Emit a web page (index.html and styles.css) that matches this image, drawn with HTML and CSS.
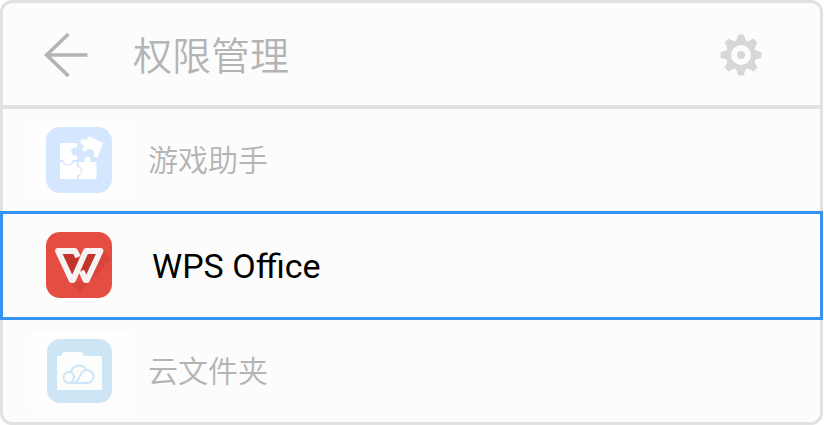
FILE: index.html
```html
<!DOCTYPE html>
<html lang="zh-CN">
<head>
    <meta charset="UTF-8">
    <meta name="viewport" content="width=device-width, initial-scale=1.0">
    <title>权限管理</title>
    <link rel="stylesheet" href="styles.css">
</head>
<body>
    <main class="panel">
        <header class="header">
            <button type="button" class="icon-button" aria-label="返回">
                <svg width="44" height="44" viewBox="0 0 44 44" fill="none" stroke="#b4b4b4" stroke-width="3.6">
                    <path d="M24.5 1 L2.5 22 L24.5 43 M2.5 22 H43.5"/>
                </svg>
            </button>
            <h1>权限管理</h1>
            <button type="button" class="icon-button settings" aria-label="设置">
                <svg width="44" height="44" viewBox="-22 -22 44 44">
                    <g fill="#d7d7d7">
                        <path id="tooth" d="M-6.5 -12 Q-4 -15 -2.7 -20.5 H2.7 Q4 -15 6.5 -12 V12 Q4 15 2.7 20.5 H-2.7 Q-4 15 -6.5 12 Z"/>
                        <use href="#tooth" transform="rotate(45)"/>
                        <use href="#tooth" transform="rotate(90)"/>
                        <use href="#tooth" transform="rotate(135)"/>
                        <circle r="14.5"/>
                    </g>
                    <circle r="10" fill="#fcfcfc"/>
                    <circle r="4" fill="#d7d7d7"/>
                </svg>
            </button>
        </header>

        <ul class="app-list">
            <li class="app">
                <span class="app-icon">
                    <svg width="66" height="66" viewBox="0 0 66 66">
                        <rect width="66" height="66" rx="14" fill="#d5e6ff"/>
                        <g fill="#fff">
                            <path d="M15 16 H31 V20.5 A4.3 4.3 0 1 0 31 28.5 V33 H26.5 A4.5 4.5 0 0 1 17.5 33 H14 V17 Z"/>
                            <path d="M14 35 H16.5 A6 6 0 0 0 27.5 35 H31 V40 A4 4 0 0 1 31 48 V52 H15 L14 51 Z"/>
                            <path d="M33 35 H39.5 A3 3 0 1 1 43.5 35 H50.5 V51 L49.5 52 H33 V49 A5.5 5.5 0 0 0 33 39 Z"/>
                            <path d="M43 9 L57 16 L51.5 31 L47.5 29 A4.5 4.5 0 1 0 39.5 25 L36 22.5 L38 18 A3 3 0 1 1 40 13.5 Z"/>
                        </g>
                    </svg>
                </span>
                <span class="app-name">游戏助手</span>
            </li>
            <li class="app active">
                <span class="app-icon">
                    <svg width="66" height="66" viewBox="0 0 66 66">
                        <rect width="66" height="66" rx="14" fill="#e54d42"/>
                        <path d="M56 18 L65 27 L34 60 L24 50 L41 49 Z" fill="#d9453b"/>
                        <path d="M12 19 H29 L33 28 L26 46 Z M40 19 H54 L40 47 L36 38 Z" fill="#c1352c"/>
                        <path d="M32 25 L29 19 H12 L25.5 48 H27 L40 19 H54.5 L41 48 H39.500 L35.500 39" fill="none" stroke="#f7f3f3" stroke-width="5.8" stroke-linejoin="round"/>
                    </svg>
                </span>
                <span class="app-name">WPS Office</span>
            </li>
            <li class="app">
                <span class="app-icon">
                    <svg width="66" height="66" viewBox="0 0 66 66">
                        <rect x="1" y="1" width="65" height="64" rx="13" fill="#cde5f4"/>
                        <path d="M11 18 H15 L17 14 H36 L38 18 H54 Q56 18 56 20 V52 H11 Z" fill="#fcfdfd"/>
                        <g fill="none" stroke="#cde5f4" stroke-width="2">
                            <path d="M25 34 A8 8 0 0 1 40 32"/>
                            <path d="M28 45 H23 A5 5 0 0 1 23 34 Q28 34 28 40 Q27 43 25 45"/>
                            <path d="M27 45 H41 A6.5 6.5 0 0 0 41 32 Q36 32 34 38 Q32 43 29 45"/>
                        </g>
                    </svg>
                </span>
                <span class="app-name">云文件夹</span>
            </li>
        </ul>
    </main>
</body>
</html>
```
FILE: styles.css
```css
* {
    box-sizing: border-box;
}
body {
    margin: 0;
    background: #fff;
    font-family: "Noto Sans CJK SC", sans-serif;
}
.panel {
    margin-right: 1px;
    background: #fcfcfc;
    border: 3px solid #e1e1e1;
    border-radius: 12px;
}
.header {
    display: flex;
    align-items: center;
    padding: 25px 57px 23px 41px;
    border-bottom: 4px solid #e1e1e1;
}
h1 {
    margin: 0 0 0 45px;
    padding-bottom: 4px;
    color: #b4b4b4;
    font-size: 39px;
    font-weight: 350;
    line-height: 50px;
}
.icon-button {
    display: flex;
    padding: 0;
    background: none;
    border: none;
    cursor: pointer;
}
.settings {
    margin-left: auto;
}
.app-list {
    margin: 0;
    padding: 0;
    list-style: none;
}
.app {
    display: flex;
    align-items: center;
    padding: 12px 27px;
    color: #b4b4b4;
    font-size: 30px;
    font-weight: 350;
    line-height: 40px;
}
.app-icon {
    display: flex;
    padding: 6px 22px 6px 16px;
    background: #fefefe;
}
.app-name {
    margin-left: 14px;
    padding-bottom: 4px;
}
.active {
    margin: 0 -3px;
    padding-bottom: 13px;
    border: 3px solid #3592f3;
    color: #000;
    font-family: Roboto, sans-serif;
    font-size: 34px;
    font-weight: 400;
}
.active .app-icon {
    background: none;
}
.active .app-name {
    margin-left: 18px;
    padding: 2px 0 0;
}
```
